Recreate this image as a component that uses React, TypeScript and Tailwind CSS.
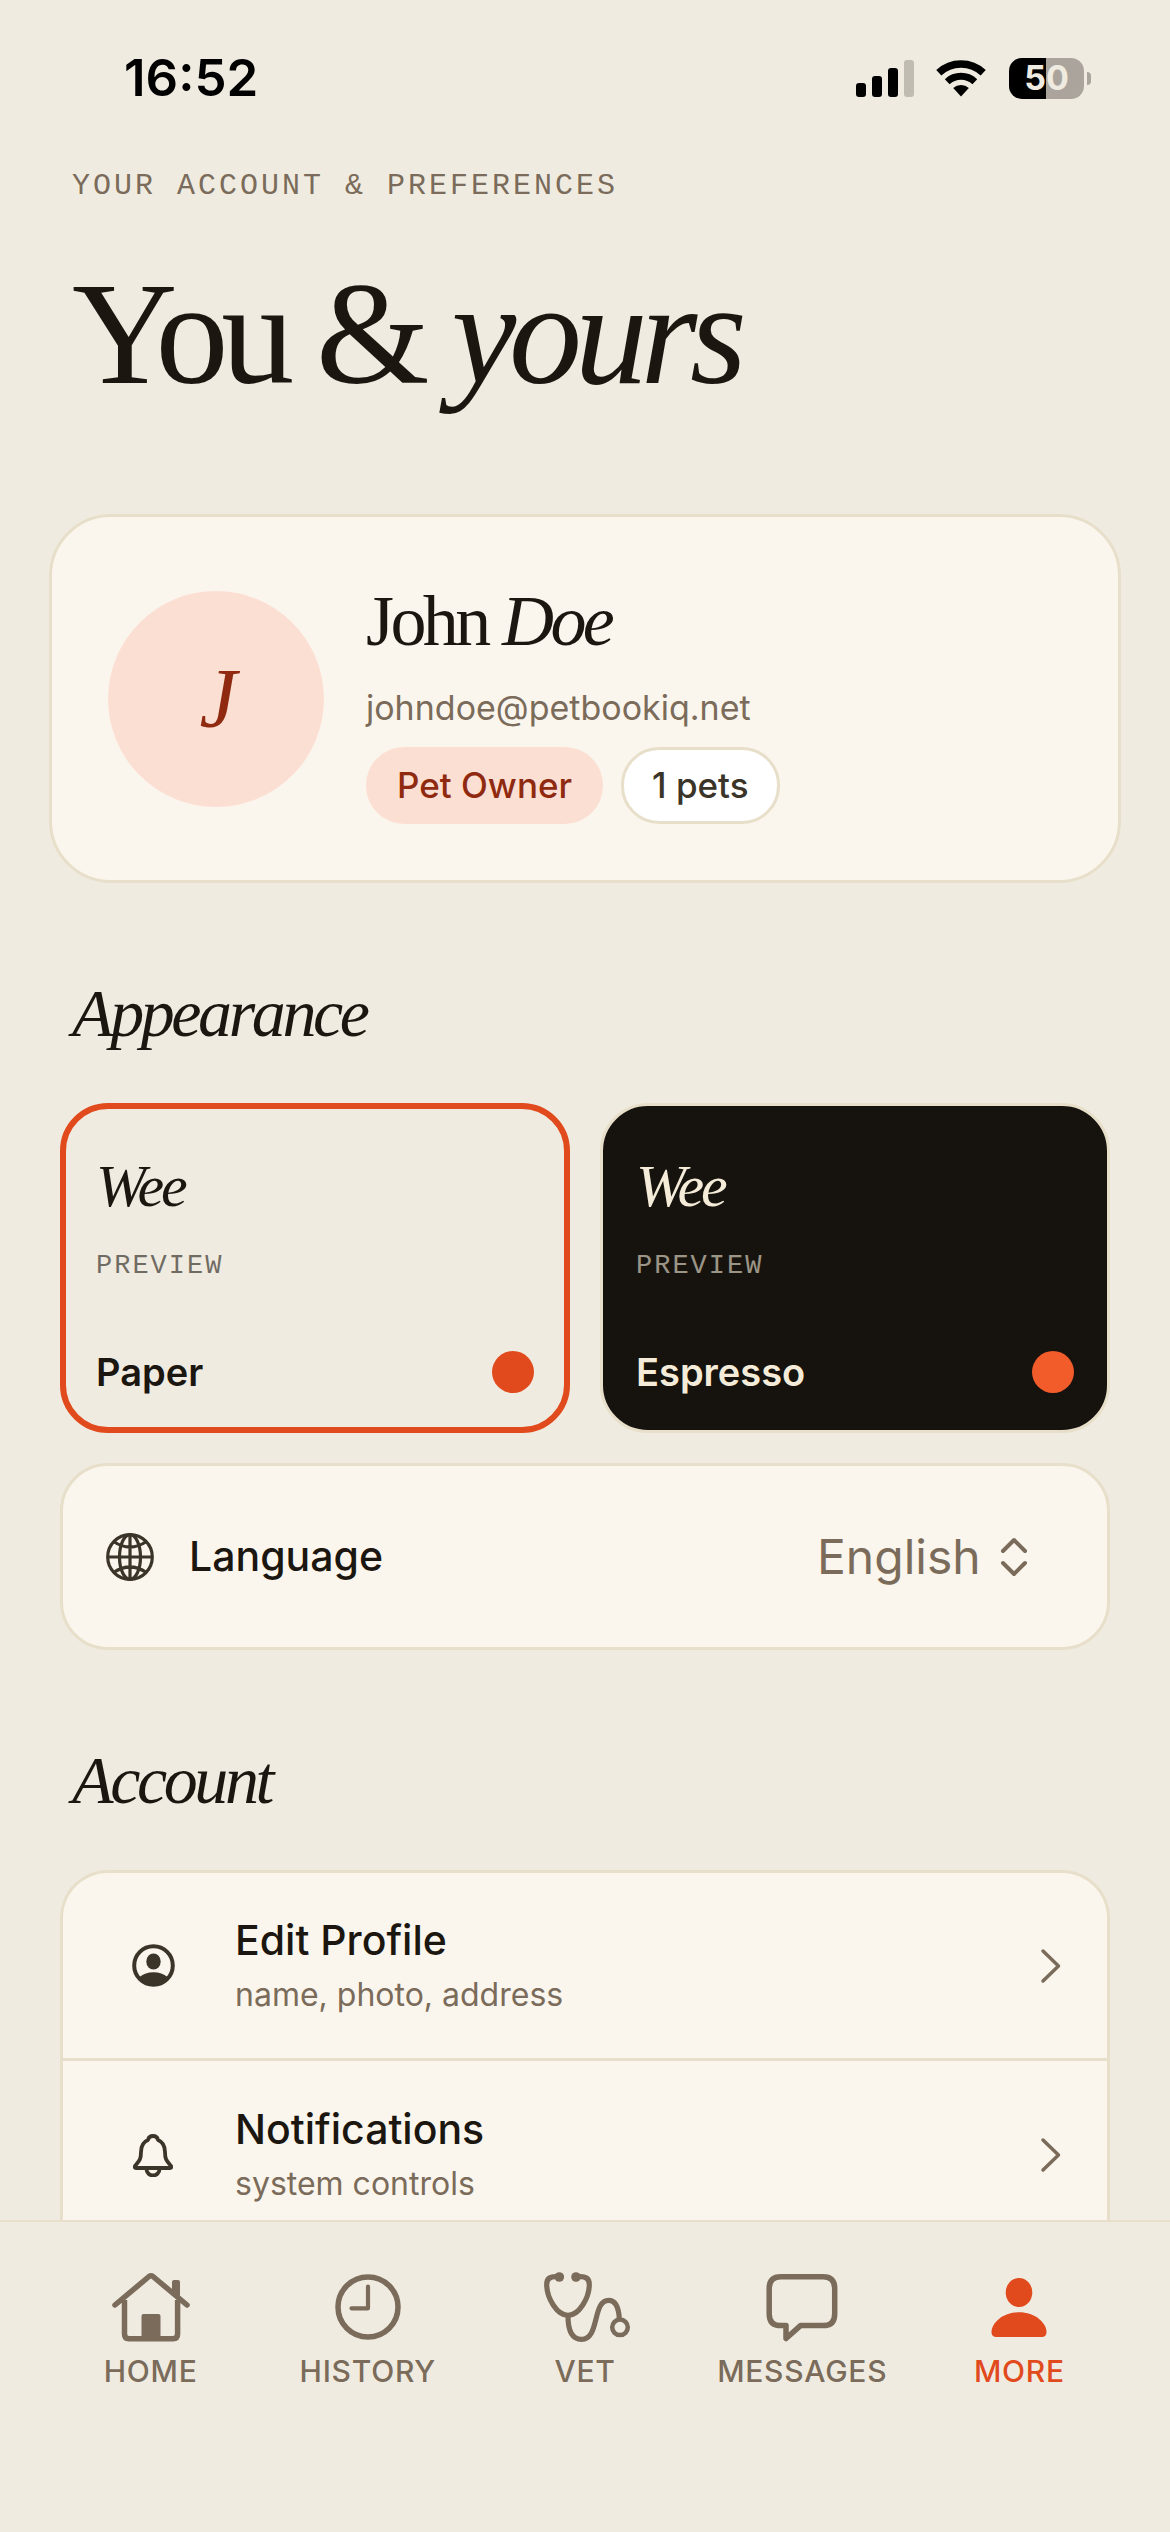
import React from "react"

const SERIF = "font-['Liberation_Serif',serif] tracking-tighter"
const MONO = "font-['Liberation_Mono',monospace]"

/**
 * Phone status bar: time, signal, wifi and battery
 */
const StatusBar = () => {
  return (
    <header className="flex shrink-0 items-center justify-between pt-14 pr-[79px] pl-[124px] text-black">
      <time className="text-[51px] leading-[44px] font-semibold">16:52</time>
      <div className="flex items-center">
        <svg className="h-[37px] w-[58px]" viewBox="0 0 58 37" aria-hidden="true">
          <rect x="0" y="23" width="10" height="14" rx="3" />
          <rect x="16" y="16" width="10" height="21" rx="3" />
          <rect x="32" y="8" width="10" height="29" rx="3" />
          <rect x="48" y="0" width="10" height="37" rx="3" fill="#c1bcb1" />
        </svg>
        <svg className="ml-[22px] h-[37px] w-[50px]" viewBox="0 0 50 37" fill="none" stroke="#000" aria-hidden="true">
          <path d="M2.8 12.7A32.5 32.5 0 0 1 47.2 12.7" strokeWidth="7.5" />
          <path d="M11.2 21.7A20.2 20.2 0 0 1 38.8 21.7" strokeWidth="7" />
          <path d="M25 36.5L17.2 28A11.5 11.5 0 0 1 32.8 28Z" fill="#000" stroke="none" />
        </svg>
        <div className="ml-[23px] flex h-[41px] w-[75px] items-center justify-center rounded-[13px] bg-linear-to-r from-black from-50% to-[#aaa49d] to-50% text-[34px] leading-none font-bold text-[#f0ebe0]">
          50
        </div>
        <div className="ml-[3px] h-[13px] w-1 rounded-r-full bg-[#aaa49d]" />
      </div>
    </header>
  )
}

const Chevron = () => {
  return (
    <svg className="h-[36px] w-[22px] text-[#7a6b5a]" viewBox="0 0 22 36" fill="none" stroke="currentColor" strokeWidth="3.5" strokeLinecap="round" strokeLinejoin="round" aria-hidden="true">
      <path d="M3 3L18.5 18L3 33" />
    </svg>
  )
}

const GlobeIcon = () => {
  return (
    <svg className="size-12 text-[#3a3429]" viewBox="0 0 48 48" fill="none" stroke="currentColor" strokeWidth="3.2" aria-hidden="true">
      <circle cx="24" cy="24" r="22.3" />
      <ellipse cx="24" cy="24" rx="10.5" ry="22.3" />
      <path d="M24 2V46M2 24H46M7.5 8.5Q24 19.5 40.5 8.5M7.5 39.5Q24 28.5 40.5 39.5" />
    </svg>
  )
}

const ProfileIcon = () => {
  return (
    <svg className="size-[43px] text-[#3a3429]" viewBox="0 0 43 43" fill="currentColor" aria-hidden="true">
      <circle cx="21.5" cy="21.5" r="19.3" fill="none" stroke="currentColor" strokeWidth="4" />
      <ellipse cx="21.5" cy="17.5" rx="7.2" ry="8" />
      <path d="M7.5 33Q13 28.3 21.5 28.3T35.5 33Q30 41 21.5 41T7.5 33Z" />
    </svg>
  )
}

const BellIcon = () => {
  return (
    <svg className="h-[43px] w-10 text-[#3a3429]" viewBox="0 0 40 43" fill="none" stroke="currentColor" strokeWidth="3.8" strokeLinejoin="round" aria-hidden="true">
      <path d="M20 2c-3 0-4.5 1.500-5 4C10 8 8 12 8 18c0 8-2 9-6 14q-1 2 1 2h34q2 0 1-2c-4-5-6-6-6-14 0-6-2-10-7-12-.5-2.500-2-4-5-4z" />
      <path d="M13.500 35a6.500 6.500 0 0 0 13 0" />
    </svg>
  )
}

const HomeIcon = () => {
  return (
    <svg className="h-[72px] w-20" viewBox="0 0 80 72" fill="none" stroke="currentColor" strokeWidth="5.5" strokeLinecap="round" strokeLinejoin="round" aria-hidden="true">
      <path d="M4 34L38 5.500Q40 4 42 5.500L76 34" />
      <path d="M13.500 29V63Q13.500 67.700 18 67.700H62Q66.600 67.700 66.600 63V29" strokeLinecap="butt" />
      <path d="M61 24V11Q61 9 63 9H67Q69 9 69 11V31Z" fill="currentColor" stroke="none" />
      <path d="M30.500 68V45Q30.500 43 32.500 43H47.500Q49.500 43 49.500 45V68Z" fill="currentColor" stroke="none" />
    </svg>
  )
}

const HistoryIcon = () => {
  return (
    <svg className="h-[72px] w-20" viewBox="0 0 80 72" fill="none" stroke="currentColor" strokeLinecap="round" strokeLinejoin="round" aria-hidden="true">
      <circle cx="40" cy="36" r="30" strokeWidth="5.5" />
      <path d="M40 15.500V37.300H23.500" strokeWidth="4.2" />
    </svg>
  )
}

const VetIcon = () => {
  return (
    <svg className="h-[72px] w-[94px]" viewBox="-4 0 94 72" fill="none" stroke="currentColor" strokeWidth="5.2" aria-hidden="true">
      <circle cx="17.300" cy="6" r="4.800" fill="currentColor" stroke="none" />
      <circle cx="34" cy="6" r="4.800" fill="currentColor" stroke="none" />
      <path d="M17 5.700H13.500Q4.700 5.700 4.700 13.500C4.700 27 15 44.300 26 44.300S47.300 27 47.300 13.500Q47.300 5.700 38.500 5.700H35" />
      <path d="M26 45C26 60 30 68.300 39.500 68.300C58 68.300 50 29.300 66.700 29.300C74 29.300 76.500 36 77.300 47" />
      <circle cx="78" cy="56.300" r="7.800" strokeWidth="4.500" />
    </svg>
  )
}

const MessagesIcon = () => {
  return (
    <svg className="h-[72px] w-20" viewBox="0 0 80 72" fill="none" stroke="currentColor" strokeWidth="5.5" strokeLinejoin="round" aria-hidden="true">
      <path d="M19 5.800H61Q72.700 5.800 72.700 17.500V42.900Q72.700 54.600 61 54.600H38.500L24 67.500V54.600H19Q7.200 54.600 7.200 42.900V17.500Q7.200 5.800 19 5.800Z" />
    </svg>
  )
}

const MoreIcon = () => {
  return (
    <svg className="h-[72px] w-20" viewBox="0 0 80 72" fill="currentColor" aria-hidden="true">
      <ellipse cx="40" cy="21.500" rx="13.300" ry="14.500" />
      <path d="M18 66C14 66 12.500 64 12.500 61C12.500 52 24 41.300 40 41.300S67.500 52 67.500 61C67.500 64 66 66 62 66Z" />
    </svg>
  )
}

const SectionTitle = ({ children }: { children: React.ReactNode }) => {
  return <h2 className={`${SERIF} mt-[90px] mb-[50px] px-3 text-[68px] leading-[80px] italic`}>{children}</h2>
}

/**
 * Card that previews one colour theme
 */
const ThemeCard = ({ name, selected, cardClass, dotClass }: { name: string; selected: boolean; cardClass: string; dotClass: string }) => {
  return (
    <button type="button" aria-pressed={selected} className={`flex h-[330px] flex-1 flex-col rounded-[48px] text-left ${cardClass}`}>
      <span className={`${SERIF} text-[60px] leading-[76px] italic`}>Wee</span>
      <span className={`${MONO} mt-6 text-[27px] leading-9 tracking-[2px] opacity-60`}>PREVIEW</span>
      <span className="mt-auto flex w-full items-center justify-between">
        <span className="text-[38px] leading-[54px] font-semibold">{name}</span>
        <span className={`size-[42px] rounded-full ${dotClass}`} />
      </span>
    </button>
  )
}

const AccountRow = ({ icon, title, subTitle }: { icon: React.ReactNode; title: string; subTitle: string }) => {
  return (
    <li className="h-[188px]">
      <button type="button" className="flex size-full items-center pr-[45px] pl-[60px] text-left">
        <span className="flex w-[60px] shrink-0 justify-center">{icon}</span>
        <span className="ml-[52px] flex flex-1 flex-col gap-1">
          <span className="text-[41px] leading-[54px] font-medium">{title}</span>
          <span className="text-[32px] leading-[48px] text-[#7a6b5a]">{subTitle}</span>
        </span>
        <Chevron />
      </button>
    </li>
  )
}

const tabs = [
  { label: "HOME", icon: <HomeIcon /> },
  { label: "HISTORY", icon: <HistoryIcon /> },
  { label: "VET", icon: <VetIcon /> },
  { label: "MESSAGES", icon: <MessagesIcon /> },
  { label: "MORE", icon: <MoreIcon />, active: true },
]

export default function App() {
  return (
    <div className="flex h-screen flex-col bg-[#f0ebe0] font-['Inter',sans-serif] text-[#1b1610]">
      <StatusBar />

      <main className="min-h-0 flex-1 overflow-hidden px-[60px] pt-[66px]">
        <div className="px-3">
          <p className={`${MONO} text-[30px] leading-10 tracking-[3px] text-[#7a6b5a]`}>YOUR ACCOUNT &amp; PREFERENCES</p>
          <h1 className={`${SERIF} mt-12 text-[146px] leading-[160px]`}>
            You &amp; <em>yours</em>
          </h1>
        </div>

        <section className="-mx-[11px] mt-[100px] flex items-center rounded-[62px] border-[3px] border-[#e7dfca] bg-[#fbf6ed] px-14 py-14">
          <div className={`${SERIF} flex size-[216px] shrink-0 items-center justify-center rounded-full bg-[#fcdfd3] text-[84px] text-[#8f2a10] italic`}>J</div>
          <div className="ml-[42px]">
            <p className={`${SERIF} text-[72px] leading-[96px]`}>
              John <em>Doe</em>
            </p>
            <p className="mt-3 text-[34px] leading-[54px] text-[#7a6b5a]">johndoe@petbookiq.net</p>
            <div className="mt-3 flex gap-[18px] text-[35px] font-medium">
              <span className="flex h-[77px] items-center rounded-[38px] bg-[#fcdfd3] px-[31px] text-[#8f2a10]">Pet Owner</span>
              <span className="flex h-[77px] items-center rounded-[38px] border-[3px] border-[#e7dfca] bg-white px-7 text-[#3a3429]">1 pets</span>
            </div>
          </div>
        </section>

        <SectionTitle>Appearance</SectionTitle>
        <div className="flex gap-[30px]">
          <ThemeCard name="Paper" selected cardClass="border-[6px] border-[#e04a1d] bg-[#f0ebe0] px-[30px] pt-[39px] pb-7" dotClass="bg-[#e04a1d]" />
          <ThemeCard name="Espresso" selected={false} cardClass="border-[3px] border-[#e7dfca] bg-[#16120e] px-[33px] pt-[42px] pb-[31px] text-[#f4ecd8]" dotClass="bg-[#f25c2b]" />
        </div>
        <div className="mt-[30px] flex h-[187px] items-center rounded-[48px] border-[3px] border-[#e7dfca] bg-[#fbf6ed] pr-[79px] pl-[43px]">
          <GlobeIcon />
          <label htmlFor="language" className="ml-[35px] flex-1 text-[41px] font-medium">
            Language
          </label>
          <select id="language" className="appearance-none bg-transparent text-[48px] text-[#7a6b5a]">
            <option>English</option>
          </select>
          <svg className="ml-[19px] h-10 w-7 text-[#7a6b5a]" viewBox="0 0 28 40" fill="none" stroke="currentColor" strokeWidth="4" strokeLinecap="round" strokeLinejoin="round" aria-hidden="true">
            <path d="M3 14L14 3L25 14M3 26L14 37L25 26" />
          </svg>
        </div>

        <SectionTitle>Account</SectionTitle>
        <ul className="divide-y-[3px] divide-[#e7dfca] rounded-t-[48px] border-[3px] border-b-0 border-[#e7dfca] bg-[#fbf6ed]">
          <AccountRow icon={<ProfileIcon />} title="Edit Profile" subTitle="name, photo, address" />
          <AccountRow icon={<BellIcon />} title="Notifications" subTitle="system controls" />
        </ul>
      </main>

      <nav className="flex h-[312px] shrink-0 border-t-2 border-[#e7dfca] bg-[#f0ebe0] px-[42px] pt-[49px]">
        {tabs.map(({ label, icon, active }) => (
          <button
            key={label}
            type="button"
            className={`flex flex-1 flex-col items-center gap-2 self-start text-[30px] leading-10 font-medium tracking-wide ${active ? "text-[#e04a1d]" : "text-[#7a6b5a]"}`}
          >
            {icon}
            {label}
          </button>
        ))}
      </nav>
    </div>
  )
}
